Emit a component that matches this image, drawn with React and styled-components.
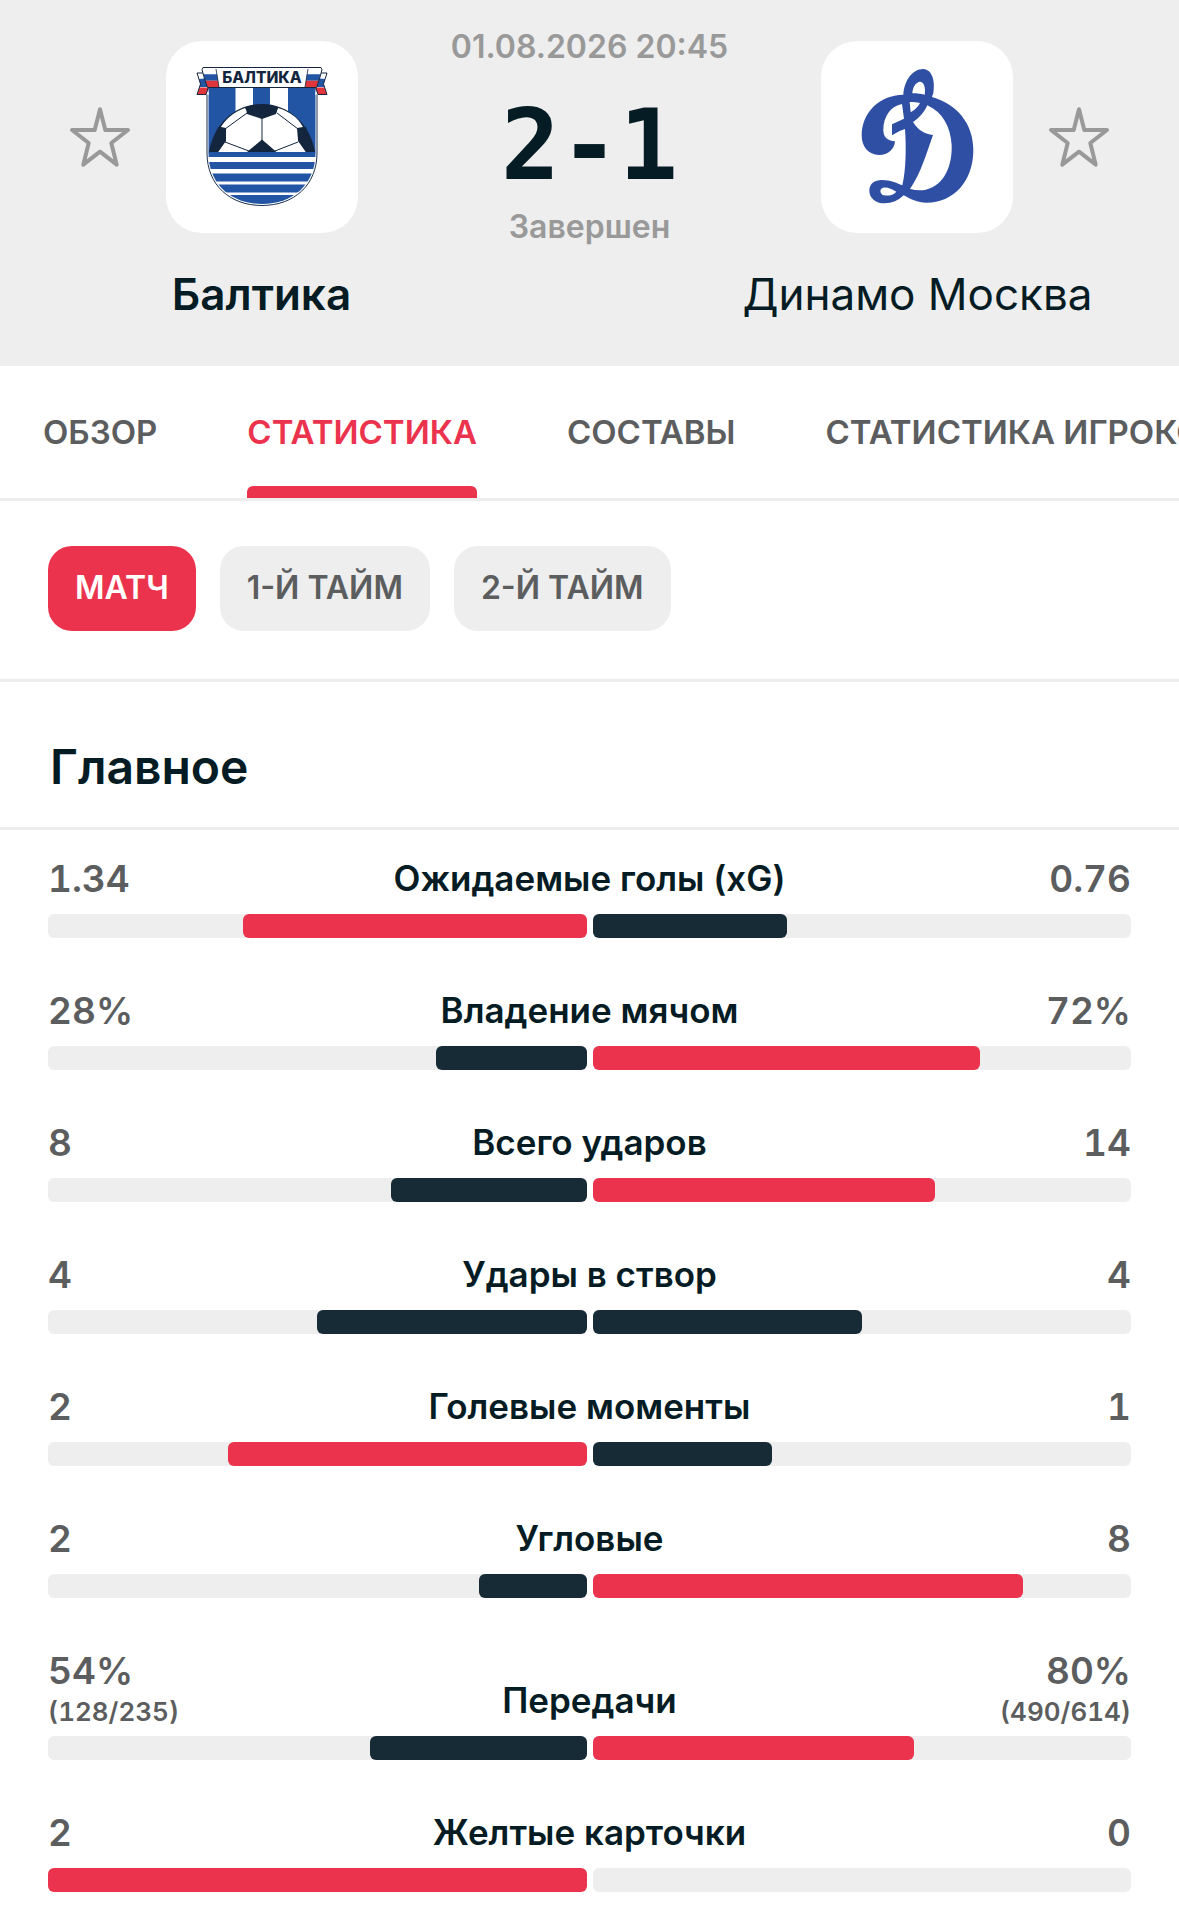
import React, { useState } from "react";
import styled, { createGlobalStyle } from "styled-components";

const color = {
  ink: "#061c24",
  navy: "#172b36",
  red: "#eb334d",
  panel: "#eeeeee",
  line: "#ededed",
  text: "#5b5d5e",
  muted: "#999999",
};

const GlobalStyle = createGlobalStyle`
  *, *::before, *::after { box-sizing: border-box; }
  body {
    margin: 0;
    background: #ffffff;
    color: ${color.ink};
    font-family: Inter, Roboto, "Liberation Sans", sans-serif;
    overflow-x: hidden;
  }
  button { font: inherit; border: 0; padding: 0; background: none; cursor: pointer; }
`;

const Header = styled.header`
  display: grid;
  grid-template-columns: minmax(0, 5fr) minmax(0, 4fr) minmax(0, 5fr);
  padding: 24px 0 46px;
  background: ${color.panel};
`;

const Team = styled.section`
  display: flex;
  flex-direction: column;
  align-items: center;
  gap: 35px;
  padding-top: 17px;
  padding-left: ${(p) => (p.$away ? "0" : "102px")};
  padding-right: ${(p) => (p.$away ? "102px" : "0")};
`;

const TeamTop = styled.div`
  display: flex;
  flex-direction: ${(p) => (p.$away ? "row-reverse" : "row")};
  align-items: center;
  gap: 34px;
  margin-left: ${(p) => (p.$away ? "0" : "-98px")};
  margin-right: ${(p) => (p.$away ? "-98px" : "0")};
`;

const StarButton = styled.button`
  display: flex;
  width: 64px;
  height: 64px;
`;

const Crest = styled.div`
  display: flex;
  align-items: center;
  justify-content: center;
  width: 192px;
  height: 192px;
  border-radius: 36px;
  background: #ffffff;
`;

const TeamName = styled.h2`
  margin: 0;
  font-size: 44px;
  line-height: 52px;
  font-weight: ${(p) => (p.$winner ? 600 : 400)};
  white-space: nowrap;
`;

const Center = styled.div`
  display: flex;
  flex-direction: column;
  align-items: center;
  padding-top: 1px;
  color: ${color.muted};
  font-size: 32px;
  font-weight: 600;
  line-height: 44px;
  white-space: nowrap;
`;

const Score = styled.strong`
  padding-top: 16px;
  color: ${color.ink};
  font-family: "DejaVu Sans Mono", "Liberation Mono", monospace;
  font-size: 98px;
  font-weight: 700;
  line-height: 120px;
`;

const Tabs = styled.nav`
  display: flex;
  gap: 90px;
  height: 135px;
  padding-left: 43px;
  border-bottom: 3px solid ${color.line};
  overflow: hidden;
`;

const Tab = styled.button`
  flex: none;
  display: flex;
  flex-direction: column;
  justify-content: space-between;
  padding-top: 46px;
  color: ${(p) => (p.$active ? color.red : color.text)};
  font-size: 33px;
  line-height: 40px;
  font-weight: 600;
  white-space: nowrap;

  &::after {
    content: "";
    width: 100%;
    height: 12px;
    border-radius: 6px 6px 0 0;
    background: ${(p) => (p.$active ? color.red : "transparent")};
  }
`;

const Periods = styled.div`
  display: flex;
  gap: 24px;
  padding: 45px 48px 48px;
  border-bottom: 3px solid ${color.line};
`;

const Period = styled.button`
  height: 85px;
  padding: 0 27px 2px;
  border-radius: 24px;
  background: ${(p) => (p.$active ? color.red : color.panel)};
  color: ${(p) => (p.$active ? "#ffffff" : color.text)};
  font-size: 32px;
  font-weight: 600;
  line-height: 40px;
  white-space: nowrap;
`;

const Heading = styled.h1`
  margin: 0;
  padding: 55px 50px 30px;
  border-bottom: 3px solid ${color.line};
  font-size: 48px;
  line-height: 60px;
  font-weight: 600;
`;

const Stats = styled.ul`
  display: flex;
  flex-direction: column;
  gap: 48px;
  margin: 0;
  padding: 24px 48px 19px;
  list-style: none;
`;

const StatHead = styled.div`
  display: grid;
  grid-template-columns: 1fr auto 1fr;
  align-items: end;
`;

const Value = styled.div`
  padding-bottom: ${(p) => (p.$detailed ? "8px" : "10px")};
  color: ${color.text};
  font-size: 37px;
  line-height: 50px;
  font-weight: 600;
  font-variant-numeric: tabular-nums;
  text-align: ${(p) => p.$align};
`;

const Detail = styled.small`
  display: block;
  font-size: 26px;
  line-height: 32px;
`;

const Label = styled.h3`
  margin: 0;
  padding-bottom: 12px;
  font-size: 35px;
  line-height: 48px;
  font-weight: 600;
  white-space: nowrap;
`;

const Bars = styled.div`
  display: grid;
  grid-template-columns: 1fr 1fr;
  gap: 6px;
`;

const Track = styled.div`
  display: flex;
  justify-content: ${(p) => (p.$from === "right" ? "flex-end" : "flex-start")};
  height: 24px;
  border-radius: 6px;
  background: ${color.panel};
`;

const Fill = styled.div`
  border-radius: 6px;
  background: ${(p) => (p.$leading ? color.red : color.navy)};
`;

function Star() {
  return (
    <svg viewBox="0 0 64 64" width="64" height="64" aria-hidden="true">
      <path
        d="M32 4.300 37.300 25H60L43.300 38 48.700 59.700 32 46.700 15.300 59.700 20.700 38 4 25H26.700Z"
        fill="none"
        stroke={color.muted}
        strokeWidth="4"
        strokeLinejoin="round"
      />
    </svg>
  );
}

function Ribbon() {
  return (
    <g>
      <path d="M31 32H38L43 53.500H31L34.500 43Z" fill="#fff" />
      <path d="M33 38 43 37V46H33.500L34.500 43Z" fill="#2355a5" />
      <path d="M33.500 46.500H43L40 53.500H31Z" fill="#df353b" />
      <path d="M37 32H31L34.500 43 31 53.500H40L42.500 46" fill="none" stroke="#13263e" strokeWidth="1" />
    </g>
  );
}

function Flag() {
  return (
    <g>
      <path d="M37.500 33.300H51L52 39.700H39.300Z" fill="#2355a5" />
      <path d="M39.300 39.700H52L53 46H41.500Z" fill="#df353b" />
      <path d="M50 28 53 46" stroke="#13263e" strokeWidth="0.800" />
    </g>
  );
}

function BaltikaCrest() {
  return (
    <svg viewBox="0 0 192 192" width="192" height="192" role="img" aria-label="Балтика">
      <defs>
        <clipPath id="shield">
          <path d="M42.500 46H149.500V112C149.500 143 127 163 96 163S42.500 143 42.500 112Z" />
        </clipPath>
      </defs>
      <path d="M41 46H151V112C151 144 128 164.500 96 164.500S41 144 41 112Z" fill="#fff" stroke="#1a3050" strokeWidth="1" />
      <g clipPath="url(#shield)">
        <path d="M40 40H152V112H40Z" fill="#2355a5" />
        <path d="M69.500 46H87V74H69.500ZM104 46H122V74H104Z" fill="#fff" />
        <path d="M40 111H152V168H40Z" fill="#fff" />
        <path d="M40 111H152V116H40ZM40 121H152V128H40ZM40 132.500H152V140.500H40ZM40 143.500H152V151.500H40ZM40 154H152V168H40Z" fill="#2355a5" />
      </g>
      <path d="M43 111C48 82 70 63 96 63S144 82 149 111Z" fill="#13263e" />
      <path d="M55 86 60 87 60 99 52 111H140L132 99 131 87 137 86C132 77 125 71 112 67L110 72 96 77 82 72 79 67C67 71 59 79 55 86Z" fill="#fff" />
      <path d="M80 66Q96 61 112 66L110 73 96 78 81 73ZM96 98.500 110.500 111H81ZM43 111 52 86 60 88V100L52 111ZM149 111 140 86 132 88V100L140 111Z" fill="#13263e" />
      <path d="M96 77V100M81 72 59 88M111 72 132 88M59 101 83 110M132 101 109 110" fill="none" stroke="#13263e" strokeWidth="1" />
      <Ribbon />
      <g transform="translate(192 0) scale(-1 1)"><Ribbon /></g>
      <path d="M37 26.500H155L156 28.500 154 36 150.500 46.500H41.500L38 36 36 28.500Z" fill="#fff" />
      <Flag />
      <g transform="translate(192 0) scale(-1 1)"><Flag /></g>
      <path d="M37 26.500H155L156 28.500 154 36 150.500 46.500H41.500L38 36 36 28.500Z" fill="none" stroke="#13263e" strokeWidth="1" />
      <text x="96" y="42" textAnchor="middle" fontFamily="Inter, sans-serif" fontSize="15.500" fontWeight="800" fill="#13263e">БАЛТИКА</text>
    </svg>
  );
}

function DynamoCrest() {
  return (
    <svg viewBox="33 33 576 576" width="192" height="192" role="img" aria-label="Динамо Москва">
      <path
        fill="#2f4fa5"
        fillRule="evenodd"
        d="M280 194C283 150 308 117 340 117C367 119 376 153 370 190C368 195 367 198 366 201C440 222 490 280 490 360C490 455 430 518 350 518C322 518 301 507 281 496C265 512 246 520 224 520C196 520 178 503 178 482C178 462 193 450 216 450C240 450 260 459 277 466C288 420 289 350 285 297Q266 302 246 316V283L282 266L276 222C242 228 220 260 220 300C220 320 231 333 255 334C253 358 235 375 207 375C174 374 155 350 155 316C156 246 208 196 280 194ZM307 190C323 190 333 192 344 194C348 170 340 154 329 155C316 158 308 172 307 190ZM299 216L302 247C316 239 324 230 330 219Q315 215 299 216ZM352 226C343 246 327 265 309 276C325 302 345 312 369 315C351 365 333 430 300 477C317 481 333 482 348 479C405 465 427 405 425 345C422 292 398 246 352 226ZM259 485C244 475 230 470 219 473C207 477 210 492 221 496C237 499 251 494 259 485Z"
      />
    </svg>
  );
}

const tabs = ["ОБЗОР", "СТАТИСТИКА", "СОСТАВЫ", "СТАТИСТИКА ИГРОКОВ"];
const periods = ["МАТЧ", "1-Й ТАЙМ", "2-Й ТАЙМ"];
const stats = [
  { label: "Ожидаемые голы (xG)", home: 1.34, away: 0.76 },
  { label: "Владение мячом", home: 28, away: 72, unit: "%" },
  { label: "Всего ударов", home: 8, away: 14 },
  { label: "Удары в створ", home: 4, away: 4 },
  { label: "Голевые моменты", home: 2, away: 1 },
  { label: "Угловые", home: 2, away: 8 },
  { label: "Передачи", home: 54, away: 80, unit: "%", homeDetail: "(128/235)", awayDetail: "(490/614)" },
  { label: "Желтые карточки", home: 2, away: 0 },
];

function Stat({ label, home, away, unit = "", homeDetail, awayDetail }) {
  const total = home + away;
  return (
    <li>
      <StatHead>
        <Value $align="left" $detailed={Boolean(homeDetail)}>
          {home}{unit}
          {homeDetail && <Detail>{homeDetail}</Detail>}
        </Value>
        <Label>{label}</Label>
        <Value $align="right" $detailed={Boolean(awayDetail)}>
          {away}{unit}
          {awayDetail && <Detail>{awayDetail}</Detail>}
        </Value>
      </StatHead>
      <Bars>
        <Track $from="right">
          <Fill $leading={home > away} style={{ width: `${(home / total) * 100}%` }} />
        </Track>
        <Track $from="left">
          <Fill $leading={away > home} style={{ width: `${(away / total) * 100}%` }} />
        </Track>
      </Bars>
    </li>
  );
}

export default function App() {
  const [tab, setTab] = useState(1);
  const [period, setPeriod] = useState(0);
  return (
    <>
      <GlobalStyle />
      <Header>
        <Team>
          <TeamTop>
            <StarButton aria-label="Добавить Балтику в избранное"><Star /></StarButton>
            <Crest><BaltikaCrest /></Crest>
          </TeamTop>
          <TeamName $winner>Балтика</TeamName>
        </Team>
        <Center>
          <time dateTime="2026-08-01T20:45">01.08.2026 20:45</time>
          <Score>2-1</Score>
          <span>Завершен</span>
        </Center>
        <Team $away>
          <TeamTop $away>
            <StarButton aria-label="Добавить Динамо в избранное"><Star /></StarButton>
            <Crest><DynamoCrest /></Crest>
          </TeamTop>
          <TeamName>Динамо Москва</TeamName>
        </Team>
      </Header>
      <Tabs>
        {tabs.map((name, i) => (
          <Tab key={name} $active={i === tab} onClick={() => setTab(i)}>{name}</Tab>
        ))}
      </Tabs>
      <main>
        <Periods>
          {periods.map((name, i) => (
            <Period key={name} $active={i === period} aria-pressed={i === period} onClick={() => setPeriod(i)}>{name}</Period>
          ))}
        </Periods>
        <Heading>Главное</Heading>
        <Stats>
          {stats.map((item) => <Stat key={item.label} {...item} />)}
        </Stats>
      </main>
    </>
  );
}
